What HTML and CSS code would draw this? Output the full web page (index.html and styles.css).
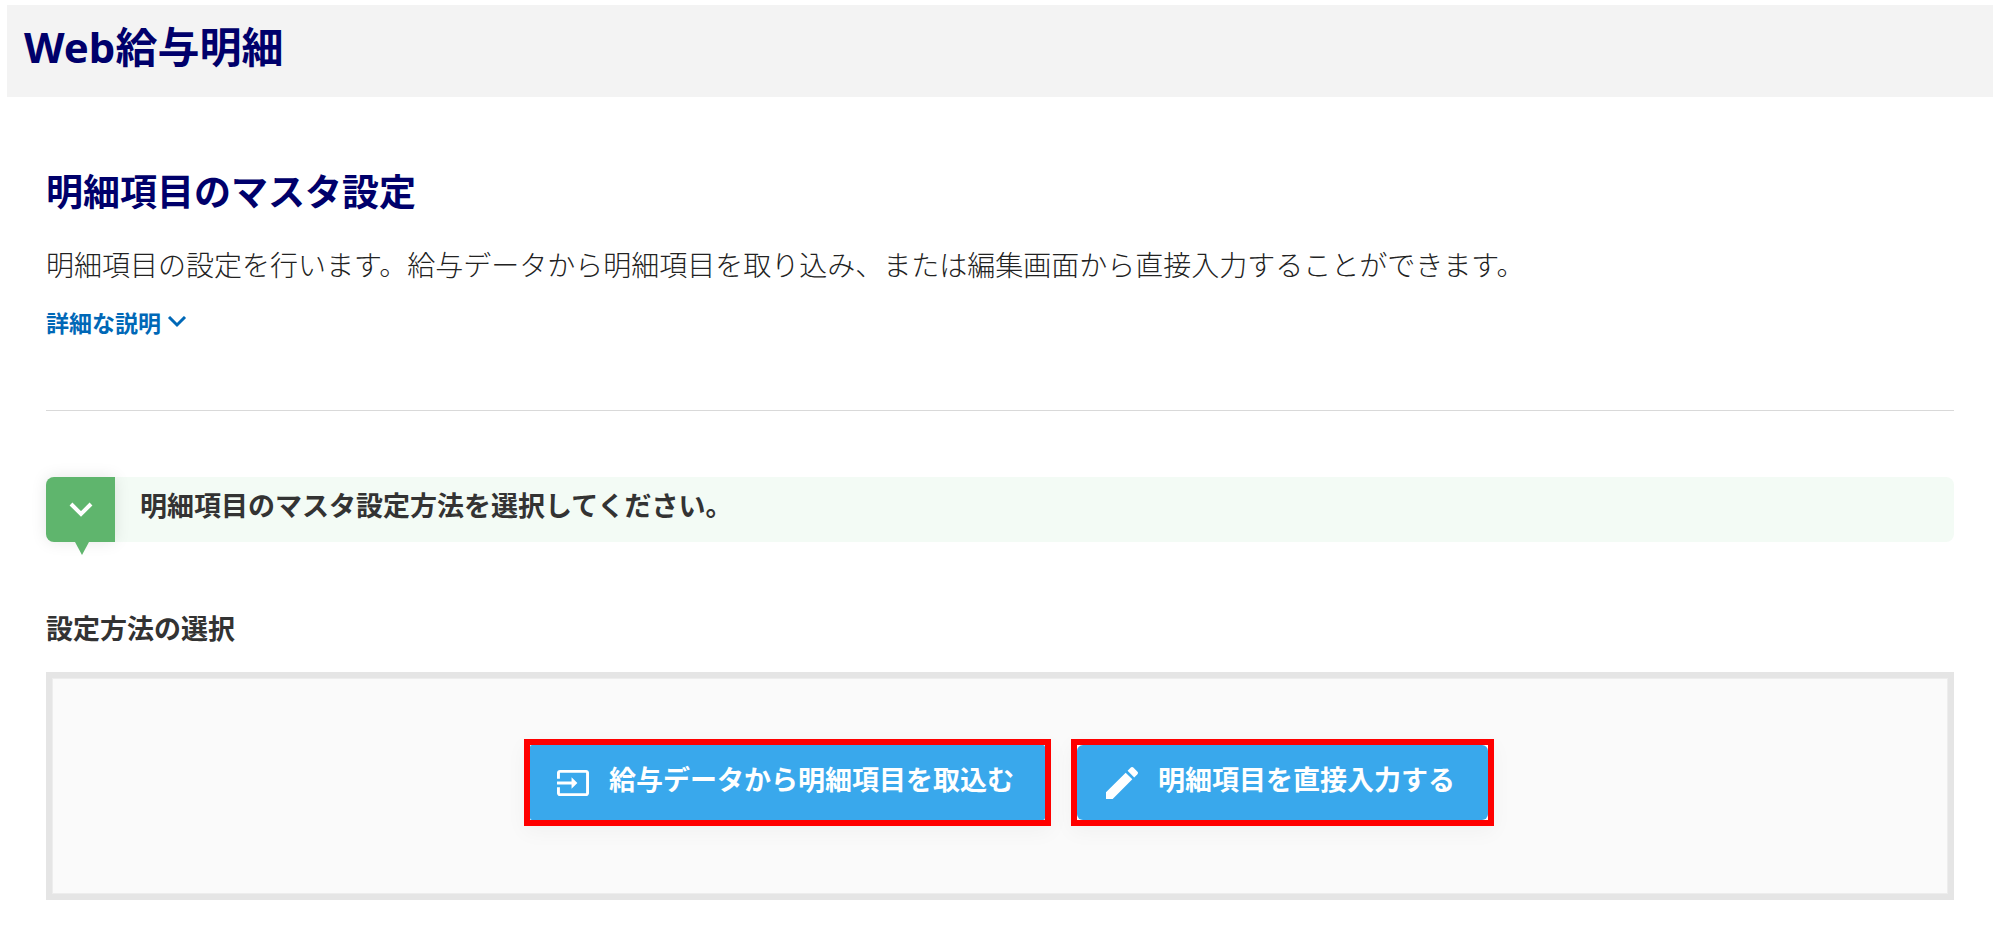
FILE: index.html
```html
<!DOCTYPE html>
<html lang="ja">
<head>
<meta charset="utf-8">
<meta name="viewport" content="width=device-width, initial-scale=1">
<title>Web給与明細</title>
<link rel="stylesheet" href="styles.css">
</head>
<body>
<header class="site-header">
  <h1 class="site-title">Web給与明細</h1>
</header>
<main class="content">
  <h2 class="page-title">明細項目のマスタ設定</h2>
  <p class="lead">明細項目の設定を行います。給与データから明細項目を取り込み、または編集画面から直接入力することができます。</p>
  <a class="detail-link" href="#">詳細な説明<svg class="detail-chevron" viewBox="0 0 20 12" aria-hidden="true"><path d="M2 1l8 8 8-8"/></svg></a>
  <hr class="divider">
  <div class="step">
    <div class="step-mark"><svg class="step-chevron" viewBox="0 0 24 15" aria-hidden="true"><path d="M2 2l10 10L22 2"/></svg></div>
    <p class="step-text">明細項目のマスタ設定方法を選択してください。</p>
  </div>
  <h3 class="section-label">設定方法の選択</h3>
  <div class="panel">
    <button class="action" type="button">
      <span class="action-face">
        <svg class="action-icon" viewBox="1 1 22 22" aria-hidden="true"><path d="M21 3.01H3c-1.1 0-2 .9-2 2V9h2V4.99h18v14.03H3V15H1v4.01c0 1.1.9 1.98 2 1.98h18c1.1 0 2-.88 2-1.98v-14c0-1.11-.9-2-2-2zM11 16l4-4-4-4v3H1v2h10v3z"/></svg>
        <span class="action-text">給与データから明細項目を取込む</span>
      </span>
    </button>
    <button class="action action-edit" type="button">
      <span class="action-face">
        <svg class="action-icon" viewBox="3 3 18 18" aria-hidden="true"><path d="M3 17.25V21h3.75L17.81 9.94l-3.75-3.75L3 17.25zM20.71 7.04c.39-.39.39-1.02 0-1.41l-2.34-2.34c-.39-.39-1.02-.39-1.41 0l-1.83 1.83 3.75 3.75 1.83-1.83z"/></svg>
        <span class="action-text">明細項目を直接入力する</span>
      </span>
    </button>
  </div>
</main>
</body>
</html>
```

FILE: styles.css
```css
* {
  box-sizing: border-box;
}

body {
  margin: 0;
  padding: 5px 7px 0;
  background: #fff;
  color: #333;
  font-family: "Noto Sans CJK JP", sans-serif;
}

h1, h2, h3, p {
  margin: 0;
}

.site-header {
  padding: 22px 17px 30px;
  background: #f3f3f3;
}

.site-title {
  color: #00006b;
  font-family: "Noto Sans", "Noto Sans CJK JP", sans-serif;
  font-size: 42px;
  line-height: 40px;
}

.content {
  padding: 73px 39px 36px;
}

.page-title {
  color: #00006b;
  font-size: 37px;
  line-height: 40px;
}

.lead {
  margin-top: 34px;
  color: #222;
  font-size: 28px;
  font-weight: 300;
  line-height: 40px;
}

.detail-link {
  display: flex;
  align-items: center;
  gap: 6px;
  width: fit-content;
  margin-top: 22px;
  color: #0068b7;
  font-size: 23px;
  font-weight: 700;
  line-height: 32px;
  text-decoration: none;
}

.detail-chevron {
  width: 20px;
  height: 12px;
  fill: none;
  stroke: currentColor;
  stroke-width: 3;
}

.divider {
  height: 1px;
  margin: 72px 0 66px;
  border: 0;
  background: #d9d9d9;
}

.step {
  display: flex;
  border-radius: 8px;
  background: #f3fbf5;
}

.step-mark {
  position: relative;
  display: flex;
  align-items: center;
  justify-content: center;
  width: 69px;
  border-radius: 8px 0 0 8px;
  background: #5fb56d;
  box-shadow: 0 0 16px rgba(0, 0, 0, 0.1);
}

.step-mark::after {
  content: "";
  position: absolute;
  top: 100%;
  left: 29px;
  border: solid transparent;
  border-width: 13px 7px 0;
  border-top-color: #5fb56d;
}

.step-chevron {
  width: 24px;
  height: 15px;
  fill: none;
  stroke: #fff;
  stroke-width: 4;
}

.step-text {
  padding: 8px 25px 17px;
  font-size: 27px;
  font-weight: 700;
  line-height: 40px;
}

.section-label {
  margin-top: 66px;
  font-size: 27px;
  line-height: 40px;
}

.panel {
  display: flex;
  flex-wrap: wrap;
  justify-content: center;
  margin-top: 24px;
  padding: 61px 2px 68px 0;
  border: 6px solid #e5e5e5;
  background: #fafafa;
  box-shadow: inset 0 0 0 1px #ededed;
}

.action {
  margin: 0 0 0 20px;
  padding: 0;
  border: 6px solid #f00;
  background: #fff;
  box-shadow: 0 6px 20px rgba(0, 0, 0, 0.04);
  color: #fff;
  font-family: inherit;
  font-size: 27px;
  font-weight: 700;
  line-height: 40px;
  cursor: pointer;
}

.action-face {
  display: flex;
  align-items: center;
  gap: 20px;
  padding: 14px 31px 14px 27px;
  border-radius: 2px;
  background: #39a8ec;
}

.action-edit .action-face {
  padding-right: 33px;
  padding-left: 29px;
  border-radius: 6px;
}

.action-icon {
  width: 32px;
  height: 32px;
  fill: currentColor;
}

.action-text {
  padding-bottom: 7px;
}
```
